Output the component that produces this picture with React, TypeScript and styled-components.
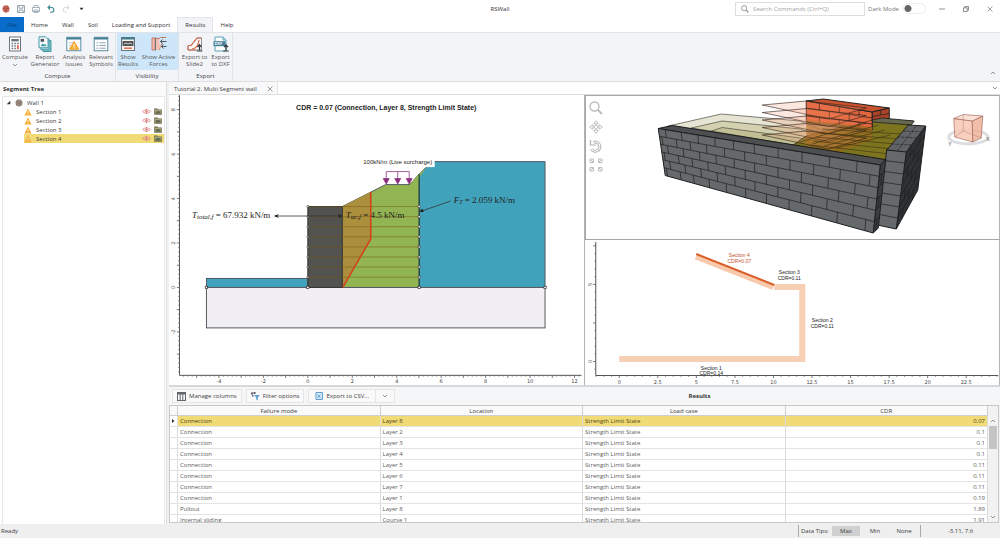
import React from "react";
import styled, { createGlobalStyle, css } from "styled-components";

const GlobalStyle = createGlobalStyle`
  *, *::before, *::after { box-sizing: border-box; }
  body { margin: 0; background: #fff; }
  body, button, input, table { font-family: "Open Sans", "Segoe UI", sans-serif; font-size: 6px; line-height: 8px; color: #3c3c3c; }
  button { border: 0; padding: 0; margin: 0; background: none; }
  h1, h2 { margin: 0; font-size: 6px; line-height: 8px; }
  svg { display: block; }
`;

/* ---------- Window shell ---------- */

const Shell = styled.div`
  display: flex;
  flex-direction: column;
  height: 100vh;
  min-height: 400px;
  overflow: hidden;
`;

const TitleBar = styled.header`
  display: grid;
  grid-template-columns: 1fr auto 1fr;
  align-items: center;
  height: 17px;
  flex: none;
`;

const QuickAccess = styled.div`
  display: flex;
  align-items: center;
  gap: 5px;
  padding-left: 1px;
`;

const IconButton = styled.button`
  display: grid;
  place-items: center;
  width: 10px;
  height: 10px;
`;

const AppTitle = styled.h1`
  font-weight: 400;
  color: #333;
`;

const TitleTools = styled.div`
  display: flex;
  align-items: center;
  justify-content: flex-end;
  height: 17px;
  padding-right: 5px;
`;

const SearchBox = styled.label`
  display: flex;
  align-items: center;
  gap: 4px;
  width: 130px;
  height: 14px;
  padding: 0 5px;
  border: 1px solid #dedede;
`;

const SearchInput = styled.input`
  flex: 1;
  min-width: 0;
  border: 0;
  padding: 0;
  outline: 0;
  background: none;
  &::placeholder { color: #a2a2a2; opacity: 1; }
`;

const DarkMode = styled.label`
  display: flex;
  align-items: center;
  gap: 4px;
  margin-left: 3px;
  color: #777;
`;

const Toggle = styled.input`
  appearance: none;
  width: 23px;
  height: 11px;
  margin: 0;
  border: 1px solid #ececec;
  border-radius: 6px;
  background: radial-gradient(circle at 4px 50%, #666 3px, transparent 4px);
`;

const WindowButtons = styled.div`
  display: flex;
  gap: 14px;
  margin-left: 11px;
`;

/* ---------- Ribbon ---------- */

const TabRow = styled.nav`
  display: flex;
  height: 15px;
  flex: none;
`;

const RibbonTab = styled.button<{ $kind?: "file" | "active" }>`
  padding: 0 7px;
  color: #333;
  ${(p) => p.$kind === "file" && css`width: 24px; padding: 0; background: #0a6cc9; color: #0b3f78;`}
  ${(p) => p.$kind === "active" && css`background: #f3f4f7; border: 1px solid #e3e5e8; border-bottom: 0;`}
`;

const Ribbon = styled.div`
  display: flex;
  height: 50px;
  flex: none;
  background: #f3f4f7;
  border-top: 1px solid #e2e4e7;
  border-bottom: 1px solid #dcdee0;
`;

const Group = styled.section`
  display: flex;
  flex-direction: column;
  border-right: 1px solid #e1e3e6;
`;

const GroupItems = styled.div`
  display: flex;
  height: 37px;
  padding-left: 1px;
`;

const GroupName = styled.div`
  padding-top: 2px;
  text-align: center;
`;

const Tool = styled.button<{ $w: number; $on?: boolean }>`
  display: flex;
  flex-direction: column;
  align-items: center;
  gap: 2px;
  width: ${(p) => p.$w}px;
  padding-top: 3px;
  line-height: 7px;
  white-space: pre;
  color: #555;
  background: ${(p) => (p.$on ? "#cde6f9" : "transparent")};
`;

const Collapse = styled(IconButton)`
  margin: auto 2px 3px auto;
`;

/* ---------- Workspace ---------- */

const Workspace = styled.main`
  display: flex;
  flex: 1;
  min-height: 0;
  background: #f0f1f3;
`;

const Sidebar = styled.aside`
  display: flex;
  flex-direction: column;
  width: 167px;
  flex: none;
  background: #fff;
  border-right: 1px solid #dcdee0;
`;

const PanelTitle = styled.h2`
  height: 14px;
  padding: 3px;
  background: #fafafb;
  color: #333;
`;

const Tree = styled.ul`
  flex: 1;
  margin: 0 1px 0 2px;
  padding: 1px 0 0;
  list-style: none;
  border: 1px solid #e6e6e6;
  border-bottom: 0;
`;

const TreeRow = styled.li<{ $level: number; $selected?: boolean }>`
  display: flex;
  align-items: center;
  gap: 4px;
  height: 9px;
  margin-left: ${(p) => (p.$level ? 21 : 3)}px;
  background: ${(p) => (p.$selected ? "#f1db77" : "transparent")};
`;

const RowActions = styled.span`
  display: flex;
  gap: 3px;
  margin-left: auto;
  padding-right: 2px;
`;

const Documents = styled.div`
  display: flex;
  flex-direction: column;
  flex: 1;
  min-width: 0;
  margin-left: 2px;
`;

const DocTabs = styled.div`
  display: flex;
  justify-content: space-between;
  align-items: center;
  height: 13px;
  flex: none;
  background: #fff;
  border-bottom: 1px solid #dedede;
`;

const DocTab = styled.div`
  display: flex;
  align-items: center;
  gap: 8px;
  height: 12px;
  padding: 2px 2px 0 5px;
  background: #f8f8f9;
  border-right: 1px solid #e4e4e4;
`;

const Views = styled.div`
  display: grid;
  grid-template-columns: 1fr 1fr;
  flex: 1;
  min-height: 0;
`;

const Stack = styled.div`
  display: grid;
  grid-template-rows: 1fr 1fr;
  min-height: 0;
  min-width: 0;
`;

const View = styled.div<{ $frame?: boolean }>`
  position: relative;
  min-width: 0;
  min-height: 0;
  overflow: hidden;
  background: #fff;
  border: ${(p) => (p.$frame ? "1px solid #a6a6a6" : "0")};
  border-right: 1px solid #b4b4b4;
  & > svg { width: 100%; height: 100%; }
`;

const ViewTools = styled.div`
  position: absolute;
  top: 4px;
  left: 3px;
  display: flex;
  flex-direction: column;
  gap: 4px;
`;

const ViewTool = styled(IconButton)`
  width: 15px;
  height: 15px;
`;

/* ---------- Results ---------- */

const Results = styled.section`
  display: flex;
  flex-direction: column;
  height: 139px;
  flex: none;
  border-top: 2px solid #d6d7d9;
`;

const ResultsBar = styled.div`
  display: flex;
  align-items: center;
  gap: 4px;
  height: 18px;
  flex: none;
  padding-left: 3px;
  background: #f5f6f7;
`;

const BarButton = styled.button`
  display: flex;
  align-items: center;
  gap: 3px;
  height: 14px;
  padding: 0 4px;
  background: #f9f9fa;
  border: 1px solid #e6e6e7;
`;

const SplitButton = styled.div`
  display: flex;
  ${BarButton} { padding: 0 6px; }
  ${BarButton} + ${BarButton} { margin-left: -1px; }
`;

const ResultsTitle = styled.h2`
  flex: 1;
  text-align: center;
  color: #333;
`;

const GridBox = styled.div`
  display: flex;
  flex: 1;
  min-height: 0;
  margin: 0 1px 1px 0;
  overflow: hidden;
  background: #fff;
  border: 1px solid #c8c8c8;
`;

const Table = styled.table`
  flex: 1 1 0;
  width: 100%;
  min-width: 0;
  height: max-content;
  table-layout: fixed;
  border-collapse: separate;
  border-spacing: 0;
  th, td { height: 11px; padding: 0 2px; border-right: 1px solid #dcdcdc; border-bottom: 1px solid #e4e4e4; text-align: left; }
  th { height: 10px; background: #fafafa; border-color: #cfcfcf; font-weight: 400; text-align: center; }
  th:first-child { width: 8px; }
  th:first-child, td:first-child { padding: 0; text-align: center; }
  td:last-child { text-align: right; }
`;

const ResultRow = styled.tr<{ $selected?: boolean }>`
  td { color: ${(p) => (p.$selected ? "#4f4415" : "#5c5c5c")}; }
  td + td { background: ${(p) => (p.$selected ? "#f1db77" : "#fff")}; }
`;

const ScrollTrack = styled.div`
  display: flex;
  flex-direction: column;
  align-items: center;
  width: 10px;
  padding-top: 10px;
  background: #f2f2f2;
`;

const Thumb = styled.div`
  width: 8px;
  height: 23px;
  background: #c4c4c4;
`;

const ArrowDown = styled(IconButton)`
  margin-top: auto;
`;

/* ---------- Status bar ---------- */

const StatusBar = styled.footer`
  display: flex;
  justify-content: space-between;
  align-items: center;
  height: 14px;
  flex: none;
  padding-left: 1px;
  background: #efefef;
`;

const StatusTools = styled.div`
  display: flex;
  align-items: center;
  height: 12px;
`;

const TipGroup = styled.div`
  display: flex;
  align-items: center;
  gap: 1px;
  height: 12px;
  padding: 0 2px;
  border-left: 1px solid #a9a9a9;
  border-right: 1px solid #a9a9a9;
`;

const TipButton = styled.button<{ $on?: boolean }>`
  width: 28px;
  height: 10px;
  background: ${(p) => (p.$on ? "#d0d0d0" : "transparent")};
`;

const TipLabel = styled.span`
  width: 30px;
`;

const Coordinates = styled.output`
  width: 79px;
  text-align: center;
`;

/* ---------- Icons ---------- */

const Chevron = ({ up }: { up?: boolean }) => (
  <svg width="6" height="4" viewBox="0 0 6 4" fill="none" stroke="#777" strokeWidth=".8">
    <path d={up ? "M1 3 3 1 5 3" : "M1 1 3 3 5 1"} />
  </svg>
);

const Cross = () => (
  <svg width="6" height="6" viewBox="0 0 6 6" stroke="#777" strokeWidth=".7"><path d="M.5.5l5 5M5.5.5l-5 5" /></svg>
);

const Magnifier = ({ size, color }: { size: number; color: string }) => (
  <svg width={size} height={size} viewBox="0 0 14 14" fill="none" stroke={color}>
    <circle cx="5.5" cy="5.5" r="4.5" strokeWidth="1.4" />
    <path d="M9 9l4 4" strokeWidth="2" />
  </svg>
);

const ComputeIcon = () => (
  <svg width="16" height="16" viewBox="0 0 16 16" fill="none">
    <rect x="2.5" y="1" width="11" height="14" fill="#fff" stroke="#6d767c" />
    <rect x="4.3" y="3" width="7.5" height="2.4" fill="#6b777e" />
    <path d="M4.5 7.5h1.6m1.2 0h1.6m1.2 0h1.6M4.5 10h1.6m1.2 0h1.6M4.5 12.5h1.6m1.2 0h1.6" stroke="#6f7a81" strokeWidth="1.4" />
    <path d="M10.1 11.2h1.6" stroke="#d9593c" strokeWidth="4" />
  </svg>
);

const ReportIcon = () => (
  <svg width="16" height="16" viewBox="0 0 16 16" fill="none">
    <path d="M6 4.5h8v11H6z" fill="#8fc7cd" stroke="#3e98a4" />
    <path d="M4 2.8h8v11H4z" fill="#b6dde1" stroke="#3e98a4" />
    <path d="M2 .8h6.5L11 3.3v8.500H2z" fill="#fff" stroke="#3e98a4" />
    <rect x="3.6" y="2.8" width="3.6" height="3" fill="#4f5960" />
    <path d="M3.6 10.3l2-3 1.4 1.5 1.2-1 1.4 2.5z" fill="#3e98a4" />
  </svg>
);

const AnalysisIcon = () => (
  <svg width="16" height="16" viewBox="0 0 16 16" fill="none">
    <rect x=".8" y="1.3" width="14" height="13.4" fill="#fff" stroke="#5b8ea1" />
    <path d="M.8 2.5h14" stroke="#3f7e95" strokeWidth="2" />
    <path d="M3 6.8h4M3 9.3h3M3 12h2" stroke="#b9c4c9" />
    <path d="M8.2 5.5l4.500 7.700h-9z" fill="#f6b03c" stroke="#f19d24" />
    <path d="M8.2 7.8v2.7m0 .8v1" stroke="#fff" />
  </svg>
);

const SymbolsIcon = () => (
  <svg width="16" height="16" viewBox="0 0 16 16" fill="none">
    <rect x="1.2" y="1.3" width="13.6" height="13.4" fill="#fff" stroke="#5b8ea1" />
    <path d="M1.2 2.5h13.6" stroke="#3f7e95" strokeWidth="2" />
    <path d="M3.5 6.8h1.7m1.3 0h6.3M3.5 9.5h1.7m1.3 0h6.3M3.5 12.2h1.7m1.3 0h6.3" stroke="#8aa3ae" strokeWidth="1" />
  </svg>
);

const ShowResultsIcon = () => (
  <svg width="16" height="16" viewBox="0 0 16 16" fill="none">
    <rect x="1.5" y="1.500" width="13" height="13" fill="#f8f4ef" stroke="#6a747a" />
    <path d="M1.5 2.5h13" stroke="#3f7e95" strokeWidth="2" />
    <rect x="2.500" y="5" width="11" height="5" fill="#4d5357" />
    <path d="M4 8l2-1 2 1 2-1 2 1" stroke="#e5ddd3" strokeWidth=".9" />
    <path d="M4 12.200h8" stroke="#dd785e" strokeWidth="1.600" />
  </svg>
);

const ForcesIcon = () => (
  <svg width="16" height="16" viewBox="0 0 16 16" fill="none">
    <path d="M1 2h3v12H1z" fill="#f1c0b3" stroke="#c9705b" strokeWidth=".9" />
    <path d="M4.500 14V2.500H8L9.500 1.500 15 1.500M8.500 14c0-3 1.500-4 3-7" stroke="#c9705b" strokeWidth="1" />
    <path d="M5 3h3.500l-.5 4 2 2-2 5H5z" fill="#f1c0b3" />
    <path d="M15.500 5.500H9.500m6 5h-5M11.500 3.500 9.500 5.500l2 2M12.500 8.500l-2 2 2 2" stroke="#4b5459" strokeWidth="1" />
    <path d="M4.500 1.500v13" stroke="#6e767a" strokeWidth="1" />
  </svg>
);

const SlideIcon = () => (
  <svg width="16" height="16" viewBox="0 0 16 16" fill="none">
    <path d="M1 14V9.500h3L10 2h4.500v12z" fill="#faf7f5" stroke="#8b9398" />
    <path d="M1 9.500h3L10 2h4.500M5 13c4-.5 6.500-3.500 7-9" stroke="#d66549" strokeWidth="1.100" />
    <path d="M1 10v4h8" stroke="#d66549" strokeWidth="1" />
    <path d="M12.500 14.300V8.800m-2 2.200 2-2.300 2 2.300M9.800 15h5.700" stroke="#343a3e" strokeWidth="1.200" />
  </svg>
);

const DxfIcon = () => (
  <svg width="16" height="16" viewBox="0 0 16 16" fill="none">
    <path d="M2 1h8l3 3v11H2z" fill="#fff" stroke="#5ba3b5" />
    <path d="M10 1v3h3" stroke="#5ba3b5" />
    <rect x=".5" y="5.200" width="12" height="5" fill="#467f97" />
    <text x="1.400" y="9.200" fontSize="4" fontWeight="700" fill="#fff">DXF</text>
    <path d="M13 14.300V9m-2 2.200L13 9l2 2.200M10.200 15h5.600" stroke="#343a3e" strokeWidth="1.200" />
  </svg>
);

const Warning = () => (
  <svg width="8" height="8" viewBox="0 0 8 8"><path d="M4 .6 7.600 7.400H.4z" fill="#f6ad35" /><path d="M4 3v2.200m0 .6v.8" stroke="#fff" strokeWidth=".8" /></svg>
);

const Eye = () => (
  <svg width="9" height="7" viewBox="0 0 9 7" fill="none" stroke="#dc8585" strokeWidth=".9">
    <path d="M.500 3.500C2.200 1.400 6.800 1.400 8.500 3.500 6.800 5.600 2.200 5.600.500 3.500z" /><path d="M4.500.8v5.400M3 3.500h3" />
  </svg>
);

const Folder = () => (
  <svg width="8" height="7" viewBox="0 0 8 7"><path d="M.4.8h3l.8 1h3.400v4.800H.4z" fill="#8f8a60" stroke="#66684c" strokeWidth=".6" /><path d="M2 4l2-1.500L6 4v1.500H2z" fill="#5e6a55" /><path d="M.8 2.600h6.400" stroke="#d3cfa5" strokeWidth=".5" /></svg>
);

/* ---------- Chart helpers ---------- */

type Pt = [number, number];
const pts = (list: Pt[]) => list.map((p) => p.join(",")).join(" ");
const range = (n: number) => Array.from({ length: n }, (_, i) => i);

interface AxisProps {
  left: number; top: number; right: number; bottom: number;
  originX: number; originY: number; scale: number;
  xs: number[]; ys: number[]; step: number; minor: number;
}

const Axes = ({ left, top, right, bottom, originX, originY, scale, xs, ys, step, minor }: AxisProps) => {
  const ticksX = range(200).map((i) => i - 60).map((i) => ({ p: originX + i * minor * scale, i }))
    .filter((t) => t.p > left && t.p < right);
  const ticksY = range(200).map((i) => i - 60).map((i) => ({ p: originY - i * minor * scale, i }))
    .filter((t) => t.p > top && t.p < bottom);
  return (
    <g stroke="#555" strokeWidth=".8" fill="none">
      <path d={`M${left} ${top}V${bottom}H${right}`} strokeWidth="1" />
      {ticksX.map((t) => <path key={t.i} d={`M${t.p} ${bottom}v${t.i % step ? 1.2 : 2.6}`} />)}
      {ticksY.map((t) => <path key={t.i} d={`M${left} ${t.p}h${t.i % step ? -1.2 : -2.6}`} />)}
      <g fill="#444" stroke="none" fontFamily="DejaVu Sans, sans-serif" fontSize="5" textAnchor="middle">
        {xs.map((v) => <text key={v} x={originX + v * scale} y={bottom + 8}>{v}</text>)}
        {ys.map((v) => (
          <text key={v} transform={`translate(${left - 4} ${originY - v * scale}) rotate(-90)`}>{v}</text>
        ))}
      </g>
    </g>
  );
};

const layers = range(8).map((i) => 206.5 + i * 10.1);

const SectionView = () => (
  <svg viewBox="169 95 415 290" role="img" aria-label="Wall cross section">
    <Axes left={179.5} top={95} right={582} bottom={375.5} originX={308} originY={287.5} scale={22.25}
      xs={[-4, -2, 0, 2, 4, 6, 8, 10, 12]} ys={[8, 6, 4, 2, 0, -2]} step={5} minor={0.2} />
    <g stroke="#555b60" strokeWidth="1">
      <rect x="206.5" y="287.5" width="339" height="40.5" fill="#f1eff3" />
      <rect x="206.5" y="278.5" width="101.5" height="9" fill="#41a3bd" />
      <polygon points="419.5,174 432.5,161.5 545.5,161.5 545.5,287.5 419.5,287.5" fill="#41a3bb" />
      <polygon points="342.5,206.5 386,184.5 410,184.5 419.5,174 419.5,287.5 342.5,287.5" fill="#92b452" />
    </g>
    <polygon points="410,184 419.5,174 426,168 419.5,178" fill="#92b452" />
    <polygon points="342.5,206.5 371,192 371,239 342.5,287" fill="#ab8f3d" />
    <rect x="308" y="206.5" width="34.5" height="81" fill="#52524f" stroke="#333" />
    <g stroke="#7a5a12" strokeOpacity=".5" strokeWidth="1">
      {layers.map((y) => <path key={y} d={`M308 ${y}H419.5`} />)}
    </g>
    <path d="M371 192V239L343 287.5" fill="none" stroke="#d2451c" strokeWidth="1.6" />
    <path d="M419.5 174V287.5" stroke="#1f4a44" strokeWidth="1.2" />
    <g fill="#fff" stroke="#333" strokeWidth=".7">
      {layers.map((y) => <circle key={y} cx="419.5" cy={y} r="1.2" />)}
      {layers.map((y) => <circle key={y} cx="308" cy={y} r="1" />)}
      {[206.5, 308, 419.5, 545.5].map((x) => <rect key={x} x={x - 1.2} y="286.3" width="2.4" height="2.4" />)}
    </g>
    <rect x="361" y="157" width="74" height="10" fill="#fff" />
    <g stroke="#8d3b86" strokeWidth=".8" fill="#8b2c80">
      <path d="M386.5 179V171.5H409.5V179M398 171.5V179" fill="none" />
      {[386.5, 398, 409.5].map((x) => <polygon key={x} points={`${x - 3},178.5 ${x + 3},178.5 ${x},184`} />)}
    </g>
    <g stroke="#333" strokeWidth=".8" fill="#222">
      <path d="M275 216H341M451 201 422 211" />
      <path d="M274 216l5-2-1.5 2 1.5 2zM343 216l-5-2 1.5 2-1.5 2zM419.5 212l3-3.5 1.5 3.5z" stroke="none" />
    </g>
    <g fontFamily="Liberation Sans, Arial, sans-serif" textAnchor="middle" fill="#222">
      <text x="386.5" y="110" fontSize="7" fontWeight="700">CDR = 0.07 (Connection, Layer 8, Strength Limit State)</text>
      <text x="398" y="164" fontSize="6">100kN/m (Live surcharge)</text>
    </g>
    <g fontFamily="Liberation Serif, Times New Roman, serif" fontSize="9" fill="#222">
      <text x="192" y="218"><tspan fontStyle="italic">T</tspan><tspan fontStyle="italic" fontSize="7" dy="1">total,f</tspan><tspan dy="-1"> = 67.932 kN/m</tspan></text>
      <text x="346" y="218"><tspan fontStyle="italic">T</tspan><tspan fontStyle="italic" fontSize="7" dy="1">ac,f</tspan><tspan dy="-1"> = 4.5 kN/m</tspan></text>
      <text x="454" y="203"><tspan fontStyle="italic">F</tspan><tspan fontStyle="italic" fontSize="6" dy="1">T</tspan><tspan dy="-1"> = 2.059 kN/m</tspan></text>
    </g>
  </svg>
);

/* ---------- 3D wall ---------- */

const lerp = (a: Pt, b: Pt, t: number): Pt => [a[0] + (b[0] - a[0]) * t, a[1] + (b[1] - a[1]) * t];

interface BrickProps { quad: [Pt, Pt, Pt, Pt]; rows: number; even: number[]; odd: number[]; fill: string; }

/* quad corners run top-left, top-right, bottom-right, bottom-left */
const BrickFace = ({ quad: [tl, tr, br, bl], rows, even, odd, fill }: BrickProps) => {
  const at = (u: number, v: number) => lerp(lerp(tl, tr, u), lerp(bl, br, u), v).map((n) => n.toFixed(1)).join(" ");
  const d: string[] = [];
  range(rows).forEach((r) => {
    if (r) d.push(`M${at(0, r / rows)}L${at(1, r / rows)}`);
    (r % 2 ? odd : even).forEach((u) => d.push(`M${at(u, r / rows)}L${at(u, (r + 1) / rows)}`));
  });
  return (
    <g stroke="#1d1e1f" strokeLinejoin="round">
      <polygon points={pts([tl, tr, br, bl])} fill={fill} strokeWidth="1" />
      <path d={d.join("")} strokeWidth=".7" fill="none" />
    </g>
  );
};

const frontEven = [665, 681, 697.5, 714.5, 733, 754, 778, 802, 829.5, 857].map((x) => (x - 658) / 222);
const frontOdd = [660.5, 675, 689, 705.5, 723.5, 744, 766, 790, 814, 841, 871].map((x) => (x - 658) / 222);

const ModelView = () => (
  <svg viewBox="586 96 413 143" role="img" aria-label="3D model of the wall">
    <g stroke="#4a4b42" strokeWidth=".7">
      <polygon points="668,126 721,114 800,121 870,150 870,158" fill="#e6e4d2" />
      <polygon points="691,128 722,121 800,129 860,152 830,150" fill="#d3d1af" />
      <polygon points="711,131 722,127.5 800,138 850,155" fill="#c1bf93" />
    </g>
    <polygon points="872,119 913,121 890,150 885,160 790,147 806,136" fill="#7d751e" stroke="#22220f" strokeWidth=".8" />
    <BrickFace quad={[[806, 101], [872, 112], [872, 130], [806, 122]]} rows={3} even={[0.2, 0.5, 0.8]} odd={[0.35, 0.65]} fill="#e4663e" />
    <polygon points="806,101 823,99 889,108 872,112" fill="#c9532f" stroke="#222" strokeWidth="1" />
    <BrickFace quad={[[872, 112], [889, 108], [889, 119], [872, 121]]} rows={2} even={[0.5]} odd={[]} fill="#a8432a" />
    <polygon points="806,120 872,127 872,140 840,152 806,146" fill="#9a6a1e" fillOpacity=".7" />
    <g stroke="#2b1d16" strokeWidth=".6" fill="#f08a62" fillOpacity=".2">
      {range(5).map((i) => {
        const y = 105 + i * 7.5;
        return <polygon key={i} points={pts([[762, y], [806, y - 4], [866, y + 3], [828, y + 14]])} />;
      })}
    </g>
    <g stroke="#3a2f12" strokeWidth=".6" fill="none">
      {range(4).map((i) => <path key={i} d={`M${800 + i * 12} ${142 + i * 2}L${872 + i * 6} ${120 + i * 5}`} />)}
      {range(5).map((i) => <path key={i} d={`M${822 - i * 3} ${129 + i * 4}L${902 - i * 3} ${134 + i * 5}`} />)}
    </g>
    <polygon points="872,120 882,118 914,121 911,125 872,122" fill="#66684f" stroke="#1d1e1f" strokeWidth=".8" />
    <polygon points="658,128.5 672,125.5 885,159.5 880,165" fill="#4d4f50" stroke="#191a1b" strokeWidth="1" />
    <polygon points="886.5,150 908,125 925.5,126 906,153" fill="#606365" stroke="#1d1e1f" strokeWidth="1" />
    <path d="M892 144l20 1M897 137l20 1M903 131l19 1M897 151l19-25" stroke="#242526" strokeWidth=".7" strokeDasharray="3 1" fill="none" />
    <BrickFace quad={[[906, 152], [925.5, 126], [917.5, 190], [896, 229]]} rows={7} even={[0.25, 0.75]} odd={[0.5]} fill="#2f3132" />
    <BrickFace quad={[[886.5, 150], [906, 152], [896, 229], [877, 225]]} rows={7} even={[]} odd={[]} fill="#66696b" />
    <BrickFace quad={[[880, 165], [885.5, 159.5], [878, 228], [873, 233]]} rows={6} even={[]} odd={[0.5]} fill="#3b3d3e" />
    <BrickFace quad={[[658, 128.5], [880, 165], [873, 233], [665, 175.5]]} rows={6} even={frontEven} odd={frontOdd} fill="#66696b" />
    <g>
      <ellipse cx="968" cy="137" rx="19.5" ry="7" fill="none" stroke="#dcdde0" strokeWidth="3" />
      <g fontFamily="Liberation Sans, sans-serif" fontSize="5" fontWeight="700" fill="#888">
        <text x="948" y="146">Y</text><text x="986" y="141">X</text>
      </g>
      <g stroke="#a56f5e" strokeWidth=".7" fillOpacity=".85">
        <polygon points="953.5,118.5 972,121 972.5,142 954.5,137" fill="#f8c8b4" />
        <polygon points="972,121 982.5,116 981,138 972.5,142" fill="#efb39c" />
        <polygon points="953.5,118.5 963,114.5 982.5,116 972,121" fill="#fadccf" />
        <path d="M963 115v16l-8.5 6M963 131l18 7" fill="none" strokeOpacity=".6" />
      </g>
    </g>
  </svg>
);

const PlanView = () => (
  <svg viewBox="585 240 414 145" role="img" aria-label="Plan of the wall sections">
    <Axes left={595.5} top={242} right={998} bottom={375.5} originX={619} originY={361.5} scale={15.42}
      xs={[0, 2.5, 5, 7.5, 10, 12.5, 15, 17.5, 20, 22.5]} ys={[5, 0]} step={5} minor={0.5} />
    <path d="M619 359H802V287H774" fill="none" stroke="#f6cfb5" strokeWidth="6" />
    <path d="M695.5 257 773 287.5" stroke="#f8c9ab" strokeWidth="5" />
    <path d="M696 254 774 285" stroke="#d95f2b" strokeWidth="2" />
    <g fontFamily="Liberation Sans, Arial, sans-serif" fontSize="5" textAnchor="middle" fill="#222">
      <g fill="#c8502c"><text x="739" y="257">Section 4</text><text x="739" y="263">CDR=0.07</text></g>
      <text x="789" y="274">Section 3</text><text x="789" y="280">CDR=0.11</text>
      <text x="822" y="322">Section 2</text><text x="822" y="328">CDR=0.11</text>
      <text x="711" y="370">Section 1</text><text x="711" y="375">CDR=0.14</text>
    </g>
  </svg>
);

/* ---------- Data ---------- */

const rows: [string, string, string][] = [
  ["Connection", "Layer 8", "0.07"],
  ["Connection", "Layer 2", "0.1"],
  ["Connection", "Layer 3", "0.1"],
  ["Connection", "Layer 4", "0.1"],
  ["Connection", "Layer 5", "0.11"],
  ["Connection", "Layer 6", "0.11"],
  ["Connection", "Layer 7", "0.11"],
  ["Connection", "Layer 1", "0.19"],
  ["Pullout", "Layer 8", "1.89"],
  ["Internal sliding", "Course 1", "1.91"],
];

export default function App() {
  return (
    <Shell>
      <GlobalStyle />
      <TitleBar>
        <QuickAccess>
          <IconButton aria-label="RSWall">
            <svg width="8" height="8" viewBox="0 0 8 8"><path d="M2 .5h4L7.600 3 7 6.500 4 7.800 1 6.500.4 3z" fill="#c96a5c" /><path d="M1 3l3 1 3-1M4 4v3.500M2 1l2 1.500L6 1" stroke="#8c3b33" strokeWidth=".6" fill="none" /></svg>
          </IconButton>
          <IconButton aria-label="Save">
            <svg width="8" height="8" viewBox="0 0 8 8" fill="none" stroke="#7f93a0" strokeWidth=".8"><path d="M.5.5h7v7h-7zM2 .5v2.700h4V.5M2 7.500V5h4v2.500" /></svg>
          </IconButton>
          <IconButton aria-label="Save all">
            <svg width="8" height="8" viewBox="0 0 8 8" fill="none" stroke="#93a1ac" strokeWidth=".8"><path d="M.5 2.500h7v4h-7zM2 2.500v-2h4v2M2 5h4v2.500H2z" /></svg>
          </IconButton>
          <IconButton aria-label="Undo">
            <svg width="8" height="8" viewBox="0 0 8 8" fill="none" stroke="#3e8a94" strokeWidth="1.100"><path d="M3 .5 1 2.500l2 2M1 2.500h3.500a2.300 2.300 0 010 4.700H3" /></svg>
          </IconButton>
          <IconButton aria-label="Redo">
            <svg width="8" height="8" viewBox="0 0 8 8" fill="none" stroke="#dadfe2" strokeWidth="1.100"><path d="M5 .5l2 2-2 2M7 2.500H3.500a2.300 2.300 0 000 4.700H5" /></svg>
          </IconButton>
          <IconButton aria-label="Customize toolbar">
            <svg width="5" height="5" viewBox="0 0 5 5"><path d="M.5.6h4M.5 1.800h4L2.500 4.200z" fill="#333" /></svg>
          </IconButton>
        </QuickAccess>
        <AppTitle>RSWall</AppTitle>
        <TitleTools>
          <SearchBox>
            <Magnifier size={8} color="#888" />
            <SearchInput aria-label="Search commands" placeholder="Search Commands (Ctrl+Q)" />
          </SearchBox>
          <DarkMode>Dark Mode<Toggle type="checkbox" /></DarkMode>
          <WindowButtons>
            <IconButton aria-label="Minimize"><svg width="6" height="6" viewBox="0 0 6 6" stroke="#777" strokeWidth=".8"><path d="M0 3h6" /></svg></IconButton>
            <IconButton aria-label="Restore"><svg width="6" height="6" viewBox="0 0 6 6" fill="none" stroke="#777" strokeWidth=".8"><path d="M.5 1.800h3.700v3.700H.5zM1.800 1.800V.5h3.700v3.700H4.200" /></svg></IconButton>
            <IconButton aria-label="Close"><Cross /></IconButton>
          </WindowButtons>
        </TitleTools>
      </TitleBar>

      <TabRow>
        <RibbonTab $kind="file">File</RibbonTab>
        <RibbonTab>Home</RibbonTab>
        <RibbonTab>Wall</RibbonTab>
        <RibbonTab>Soil</RibbonTab>
        <RibbonTab>Loading and Support</RibbonTab>
        <RibbonTab $kind="active">Results</RibbonTab>
        <RibbonTab>Help</RibbonTab>
      </TabRow>

      <Ribbon>
        <Group>
          <GroupItems>
            <Tool $w={28}><ComputeIcon />Compute<Chevron /></Tool>
            <Tool $w={32}><ReportIcon />{"Report\nGenerator"}</Tool>
            <Tool $w={26}><AnalysisIcon />{"Analysis\nIssues"}</Tool>
            <Tool $w={28}><SymbolsIcon />{"Relevant\nSymbols"}</Tool>
          </GroupItems>
          <GroupName>Compute</GroupName>
        </Group>
        <Group>
          <GroupItems>
            <Tool $w={22} $on><ShowResultsIcon />{"Show\nResults"}</Tool>
            <Tool $w={39} $on><ForcesIcon />{"Show Active\nForces"}</Tool>
          </GroupItems>
          <GroupName>Visibility</GroupName>
        </Group>
        <Group>
          <GroupItems>
            <Tool $w={29}><SlideIcon />{"Export to\nSlide2"}</Tool>
            <Tool $w={23}><DxfIcon />{"Export\nto DXF"}</Tool>
          </GroupItems>
          <GroupName>Export</GroupName>
        </Group>
        <Collapse aria-label="Collapse ribbon"><Chevron up /></Collapse>
      </Ribbon>

      <Workspace>
        <Sidebar>
          <PanelTitle>Segment Tree</PanelTitle>
          <Tree>
            <TreeRow $level={0}>
              <svg width="5" height="5" viewBox="0 0 5 5"><path d="M4.300.7v3.600H.7z" fill="#333" /></svg>
              <svg width="8" height="8" viewBox="0 0 8 8"><path d="M2 .5h4L7.600 3 7 6.500 4 7.800 1 6.500.4 3z" fill="#9c8c84" /><path d="M1 3h6M1 5h6M4 3v2" stroke="#75665f" strokeWidth=".5" /></svg>
              Wall 1
            </TreeRow>
            {[1, 2, 3, 4].map((n) => (
              <TreeRow key={n} $level={1} $selected={n === 4}>
                <Warning />Section {n}
                <RowActions><Eye /><Folder /></RowActions>
              </TreeRow>
            ))}
          </Tree>
        </Sidebar>

        <Documents>
          <DocTabs>
            <DocTab>Tutorial 2. Multi Segment wall<IconButton aria-label="Close tab"><Cross /></IconButton></DocTab>
            <IconButton aria-label="Open documents"><Chevron /></IconButton>
          </DocTabs>
          <Views>
            <View><SectionView /></View>
            <Stack>
              <View $frame>
                <ModelView />
                <ViewTools>
                  <ViewTool aria-label="Zoom"><Magnifier size={14} color="#bdbdbd" /></ViewTool>
                  <ViewTool aria-label="Pan">
                    <svg width="14" height="14" viewBox="0 0 14 14" fill="none" stroke="#b9b9b9"><path d="M7 .8 9.200 3.500H7.800v2h-1.600v-2H4.800zM7 13.200l2.200-2.700H7.800v-2h-1.600v2H4.800zM.8 7l2.700-2.200v1.400h2v1.600h-2v1.400zM13.200 7l-2.700-2.200v1.400h-2v1.600h2v1.400z" strokeWidth=".9" /></svg>
                  </ViewTool>
                  <ViewTool aria-label="Rotate">
                    <svg width="14" height="14" viewBox="0 0 14 14" fill="none"><path d="M4.500 3.500a4.500 4.500 0 11-2 6.500" stroke="#b0b0b0" strokeWidth="3" /><path d="M4.500 3.500a4.500 4.500 0 11-2 6.500" stroke="#fff" strokeWidth="1.200" /><path d="M1.500 1v5h5" stroke="#b0b0b0" strokeWidth="1.200" /></svg>
                  </ViewTool>
                  <ViewTool aria-label="Zoom all">
                    <svg width="14" height="14" viewBox="0 0 14 14" fill="none" stroke="#bcbcbc" strokeWidth="1"><path d="M1 1h3.500v3.500H1zM9.500 1H13v3.500H9.500zM1 9.500h3.500V13H1zM9.500 9.500H13V13H9.500zM2 2l2 2M12 2l-2 2M2 12l2-2M12 12l-2-2" /></svg>
                  </ViewTool>
                </ViewTools>
              </View>
              <View><PlanView /></View>
            </Stack>
          </Views>

          <Results>
            <ResultsBar>
              <BarButton>
                <svg width="9" height="9" viewBox="0 0 9 9" fill="none" stroke="#62686e"><rect x=".5" y=".5" width="8" height="8" /><path d="M.5 1.500h8" strokeWidth="2" /><path d="M3.200 2v6.500M5.800 2v6.500" /></svg>
                Manage columns
              </BarButton>
              <BarButton>
                <svg width="9" height="9" viewBox="0 0 9 9"><path d="M3 3h6L6.800 5.500v3L5.200 7.500v-2z" fill="#5d9fd4" /><path d="M0 .5h2v2H0zM2.500 0h2v2h-2zM1 3h1.500v1.500H1z" fill="#555d66" /></svg>
                Filter options
              </BarButton>
              <SplitButton>
                <BarButton>
                  <svg width="8" height="8" viewBox="0 0 8 8" fill="none" stroke="#4f95cf" strokeWidth=".9"><path d="M1 .5h6.500v7H1z" fill="#dcecf8" /><path d="M2.500 2.500l3 3.500m0-3.500-3 3.500" /></svg>
                  Export to CSV...
                </BarButton>
                <BarButton aria-label="More export formats"><Chevron /></BarButton>
              </SplitButton>
              <ResultsTitle>Results</ResultsTitle>
            </ResultsBar>
            <GridBox>
              <Table>
                <thead>
                  <tr><th aria-label="Current row" /><th>Failure mode</th><th>Location</th><th>Load case</th><th>CDR</th></tr>
                </thead>
                <tbody>
                  {rows.map(([mode, location, cdr], i) => (
                    <ResultRow key={location + mode} $selected={i === 0}>
                      <td>{i === 0 ? <svg width="7" height="4" viewBox="0 0 7 4"><path d="M2 0l2.500 2L2 4z" fill="#333" /></svg> : null}</td>
                      <td>{mode}</td><td>{location}</td><td>Strength Limit State</td><td>{cdr}</td>
                    </ResultRow>
                  ))}
                </tbody>
              </Table>
              <ScrollTrack>
                <IconButton aria-label="Scroll up"><Chevron up /></IconButton>
                <Thumb />
                <ArrowDown aria-label="Scroll down"><Chevron /></ArrowDown>
              </ScrollTrack>
            </GridBox>
          </Results>
        </Documents>
      </Workspace>

      <StatusBar>
        <span>Ready</span>
        <StatusTools>
          <TipGroup>
            <TipLabel>Data Tips:</TipLabel>
            <TipButton $on>Max</TipButton>
            <TipButton>Min</TipButton>
            <TipButton>None</TipButton>
          </TipGroup>
          <Coordinates>-3.11, 7.6</Coordinates>
        </StatusTools>
      </StatusBar>
    </Shell>
  );
}
